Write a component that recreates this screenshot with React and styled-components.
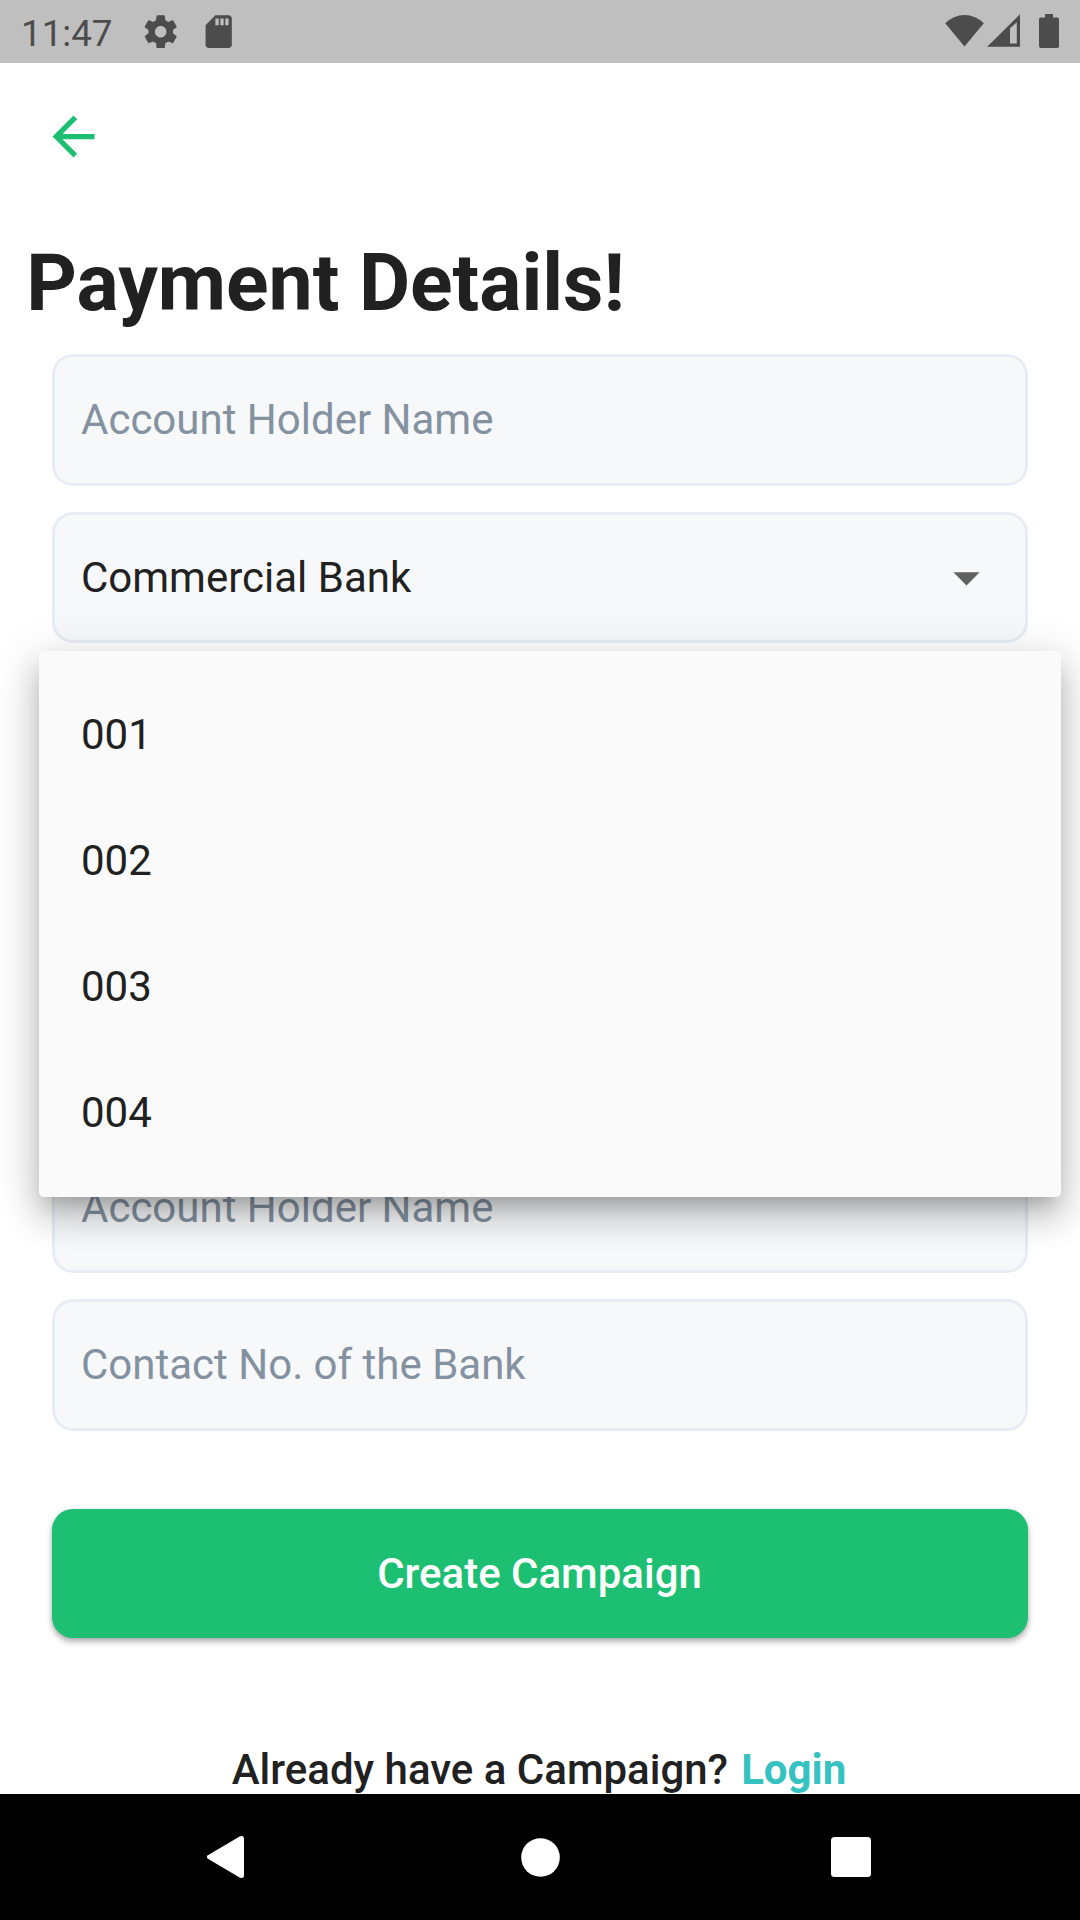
import React from "react";
import styled, { createGlobalStyle } from "styled-components";

const Global = createGlobalStyle`
  * { box-sizing: border-box; }
  html, body { margin: 0; padding: 0; background: #fff; }
  body {
    font-family: Roboto, "Liberation Sans", sans-serif;
    font-size: 42px;
    line-height: 49px;
    color: #212121;
  }
  svg { display: block; flex: none; }
`;

const Screen = styled.div`
  width: 1080px;
  height: 1920px;
  display: flex;
  flex-direction: column;
  overflow: hidden;
  background: #fff;
`;

const StatusBar = styled.header`
  flex: none;
  height: 63px;
  display: flex;
  align-items: flex-start;
  padding: 0 21px;
  background: #bfbfbf;
  color: #4c4c4c;
`;

const Clock = styled.span`
  width: 120.3px;
  padding-top: 12px;
  font-size: 36.75px;
  line-height: 43px;
`;

const Notifications = styled.div`
  display: flex;
  gap: 18.3px;
  padding-top: 11.8px;
`;

const Indicators = styled.div`
  display: flex;
  align-items: flex-start;
  margin-left: auto;
  padding-top: 14px;
`;

const Indicator = styled.svg`
  margin-left: ${(p) => p.$before || 0}px;
`;

const Page = styled.main`
  flex: 1;
  min-height: 0;
  display: flex;
  flex-direction: column;
  position: relative;
  overflow: hidden;
`;

const BackButton = styled.button`
  align-self: flex-start;
  margin: 42px 0 0 42px;
  padding: 0;
  border: 0;
  background: none;
  color: #1dbf73;
`;

const Title = styled.h1`
  margin: 69px 26.25px 0;
  font-size: 78.75px;
  line-height: 92px;
  font-weight: 700;
`;

const Form = styled.form`
  display: flex;
  flex-direction: column;
  gap: 26.25px;
  margin: 25.375px 52px 0;
`;

const Field = styled.div`
  height: 131.25px;
  display: flex;
  align-items: center;
  justify-content: space-between;
  padding: 0 27px 0.6px 26px;
  border: 3px solid #e8ecf4;
  border-radius: 21px;
  background: #f7f8f9;
  color: ${(p) => (p.$filled ? "#212121" : "#8391a1")};
`;

const SubmitButton = styled.button`
  height: 128.6px;
  margin: 78.75px 52px 0;
  padding: 0 1px 0 0;
  flex: none;
  border: 0;
  border-radius: 21px;
  background: #1dbf73;
  color: #fff;
  font: 500 42px/49px Roboto, "Liberation Sans", sans-serif;
  box-shadow: 0 4px 6px rgba(0, 0, 0, 0.28), 0 1px 4px rgba(0, 0, 0, 0.12);
`;

const Footer = styled.p`
  display: flex;
  justify-content: center;
  gap: 13.1px;
  margin: 107px 0 0;
  padding-right: 2px;
  font-weight: 500;
  white-space: nowrap;
`;

const LoginLink = styled.a`
  color: #35c2c1;
  font-weight: 700;
`;

const Menu = styled.ul`
  position: absolute;
  left: 39px;
  top: 588px;
  width: 1022px;
  margin: 0;
  padding: 21px 42px;
  list-style: none;
  background: #fafafa;
  border-radius: 5px;
  box-shadow:
    0 13px 17.8px -8px rgba(0, 0, 0, 0.2),
    0 21px 33px 2.6px rgba(0, 0, 0, 0.14),
    0 8px 45px 5.2px rgba(0, 0, 0, 0.12);
`;

const MenuItem = styled.li`
  height: 126px;
  display: flex;
  align-items: center;
  padding-bottom: 1px;
`;

const NavBar = styled.nav`
  flex: none;
  height: 126px;
  display: flex;
  align-items: center;
  justify-content: space-between;
  padding: 0 209px 0 206px;
  background: #000;
  color: #fff;
`;

const GEAR =
  "M19.43 12.98c.04-.32.07-.64.07-.98s-.03-.66-.07-.98l2.11-1.65c.19-.15.24-.42.12-.64l-2-3.46c-.12-.22-.39-.3-.61-.22l-2.49 1c-.52-.4-1.08-.73-1.69-.98l-.38-2.65C14.46 2.18 14.25 2 14 2h-4c-.25 0-.46.18-.49.42l-.38 2.65c-.61.25-1.17.59-1.69.98l-2.49-1c-.23-.09-.49 0-.61.22l-2 3.46c-.13.22-.07.49.12.64l2.11 1.65c-.04.32-.07.65-.07.98s.03.66.07.98l-2.11 1.65c-.19.15-.24.42-.12.64l2 3.46c.12.22.39.3.61.22l2.49-1c.52.4 1.08.73 1.69.98l.38 2.65c.03.24.24.42.49.42h4c.25 0 .46-.18.49-.42l.38-2.65c.61-.25 1.17-.59 1.69-.98l2.49 1c.23.09.49 0 .61-.22l2-3.46c.12-.22.07-.49-.12-.64l-2.11-1.65zM12 15.5c-1.93 0-3.5-1.57-3.5-3.5s1.57-3.5 3.5-3.5 3.5 1.57 3.5 3.5-1.57 3.5-3.5 3.5z";
const SD_CARD =
  "M18 2h-8L4.02 8 4 20c0 1.1.9 2 2 2h12c1.1 0 2-.9 2-2V4c0-1.1-.9-2-2-2zm-6 6h-2V4h2v4zm3 0h-2V4h2v4zm3 0h-2V4h2v4z";
const ARROW_BACK = "M20 11H7.83l5.59-5.59L12 4l-8 8 8 8 1.41-1.41L7.83 13H20v-2z";
const ARROW_DROP_DOWN = "M7 10l5 5 5-5z";

function Glyph({ d, size }) {
  return (
    <svg width={size} height={size} viewBox="0 0 24 24" fill="currentColor">
      <path d={d} />
    </svg>
  );
}

const codes = ["001", "002", "003", "004"];

export default function App() {
  return (
    <>
      <Global />
      <Screen>
        <StatusBar>
          <Clock>11:47</Clock>
          <Notifications>
            <Glyph d={GEAR} size={39.4} />
            <Glyph d={SD_CARD} size={39.4} />
          </Notifications>
          <Indicators>
            <Indicator width="39" height="33" viewBox="0 0 39 33" fill="currentColor">
              <path d="M0.2 9.2A27 27 0 0 1 38.8 9.2L19.5 32.6z" />
            </Indicator>
            <Indicator $before={3} width="33" height="33" viewBox="0 0 33 33" fill="currentColor">
              <path
                fillRule="evenodd"
                d="M0.2 32.7L33 0.2V32.7zM23 14.3V29.4H29.8V8.2z"
              />
            </Indicator>
            <Indicator $before={19} width="20" height="34" viewBox="0 0 20 34" fill="currentColor">
              <path d="M6 0h8v3.4h4.2a1.8 1.8 0 0 1 1.8 1.8v27a1.8 1.8 0 0 1-1.8 1.8H1.8a1.8 1.8 0 0 1-1.8-1.8v-27a1.8 1.8 0 0 1 1.8-1.8H6z" />
            </Indicator>
          </Indicators>
        </StatusBar>

        <Page>
          <BackButton type="button" aria-label="Back">
            <Glyph d={ARROW_BACK} size={63} />
          </BackButton>
          <Title>Payment Details!</Title>
          <Form>
            <Field>Account Holder Name</Field>
            <Field $filled>
              Commercial Bank
              <Indicator width="63" height="63" viewBox="0 0 24 24" fill="#616161">
                <path d={ARROW_DROP_DOWN} />
              </Indicator>
            </Field>
            <Field />
            <Field />
            <Field />
            <Field>Account Holder Name</Field>
            <Field>Contact No. of the Bank</Field>
          </Form>
          <SubmitButton type="button">Create Campaign</SubmitButton>
          <Footer>
            <span>Already have a Campaign?</span>
            <LoginLink>Login</LoginLink>
          </Footer>
          <Menu>
            {codes.map((code) => (
              <MenuItem key={code}>{code}</MenuItem>
            ))}
          </Menu>
        </Page>

        <NavBar>
          <svg width="43" height="42" viewBox="0 0 43 42" fill="currentColor">
            <path d="M1.9 19.2L33.6 0.6Q38 -1.2 38 3V39Q38 43.2 33.6 41.4L1.9 22.8Q-0.1 21 1.9 19.2z" />
          </svg>
          <svg width="39" height="39" viewBox="0 0 39 39" fill="currentColor">
            <circle cx="19.5" cy="19.5" r="19.3" />
          </svg>
          <svg width="40" height="40" viewBox="0 0 40 40" fill="currentColor">
            <rect width="40" height="40" rx="3.5" />
          </svg>
        </NavBar>
      </Screen>
    </>
  );
}
